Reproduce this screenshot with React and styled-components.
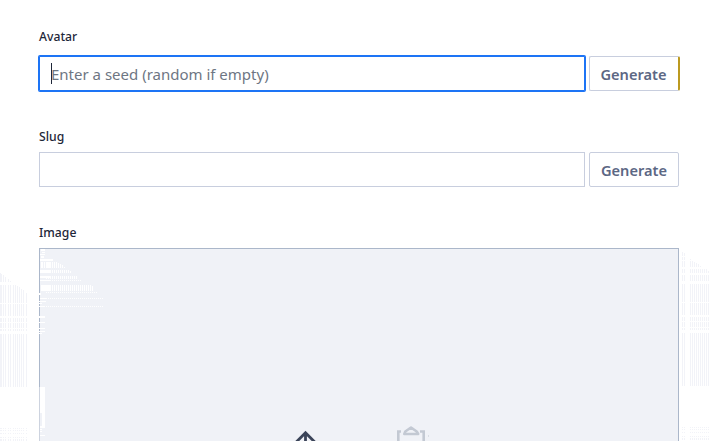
import React from "react";
import styled, { createGlobalStyle, css } from "styled-components";

const GlobalStyle = createGlobalStyle`
  * { box-sizing: border-box; }
  body { margin: 0; background: #fff; overflow: hidden; font-family: "Noto Sans", "Open Sans", sans-serif; }
`;

const Form = styled.form`
  position: relative;
  display: flex;
  flex-direction: column;
  width: 710px;
  height: 441px;
  padding: 28px 30px 0 39px;
  overflow: hidden;
`;

const Field = styled.div`
  display: flex;
  flex-direction: column;
  flex: none;
  height: ${(p) => p.$height}px;
`;

const Label = styled.label`
  flex: none;
  height: ${(p) => p.$height}px;
  line-height: 17px;
  font-size: 12.2px;
  font-weight: 500;
  color: #1e2739;
`;

const Row = styled.div`
  display: flex;
  gap: 4px;
  height: 35px;
`;

const TextBox = styled.div`
  display: flex;
  align-items: center;
  flex: none;
  width: 546px;
  height: 35px;
  padding-left: 11px;
  border: 1px solid #c8cede;
  background: #fff;
  font-size: 15px;
  color: #6e7683;
  white-space: nowrap;
  ${(p) => p.$focused && css`
    border-color: #1d74f5;
    border-radius: 1px;
    box-shadow: 0 0 0 1px #1d74f5;
  `}
`;

const Caret = styled.span`
  width: 1px;
  height: 21px;
  margin-right: -1px;
  background: #1e2739;
`;

const Button = styled.button`
  flex: none;
  width: ${(p) => (p.$accent ? 91 : 90)}px;
  height: 35px;
  padding: 0 ${(p) => (p.$accent ? 1 : 0)}px 0 0;
  border: 1px solid #c8cede;
  border-right: ${(p) => (p.$accent ? "2px solid #bc9a20" : "1px solid #c8cede")};
  border-radius: 2px;
  background: #fff;
  font: 600 14.6px "Noto Sans", sans-serif;
  color: #5c6784;
`;

const DropZone = styled.div`
  flex: none;
  width: 640px;
  height: 260px;
  border: 1px solid #abb7ca;
  background: #f0f2f7;
`;

const Grain = styled.svg`
  position: absolute;
  inset: 0;
  pointer-events: none;
`;

const Icon = styled.svg`
  position: absolute;
  left: ${(p) => p.$x}px;
  top: ${(p) => p.$y}px;
`;

const leftBars = [0, 1, 3, 5, 8, 10, 13, 15, 17, 19, 21, 23, 26];
const leftSpans = [[273, 282], [285, 303], [304, 316], [318, 322], [323, 328], [329, 331], [334, 387], [428, 429], [430, 431], [433, 434], [437, 438], [439, 441]];
const rightBars = [682, 684, 690, 692, 694, 696, 698, 700, 702, 704, 706, 708];
const rightSpans = [[252, 256], [257, 260], [261, 267], [269, 273], [275, 281], [284, 302], [303, 315], [317, 321], [322, 327], [328, 330], [333, 386], [427, 428], [429, 430], [432, 433], [436, 437], [438, 440]];
const innerSpans = [[259, 261, 53], [262, 268, 66], [270, 273, 72], [276, 279, 78], [280, 281, 81], [285, 291, 94], [292, 293, 97], [298, 299, 103], [306, 307, 103]];
const patches = [
  [41, 249, 4, 2], [42, 252, 3, 1], [40, 254, 5, 1], [41, 256, 3, 2],
  [40, 259, 12, 2], [41, 262, 2, 6], [44, 262, 1, 6], [46, 262, 5, 6], [40, 270, 10, 3],
  [40, 276, 10, 2], [40, 280, 10, 1], [41, 285, 10, 6],
  [39, 293, 2, 2], [40, 298, 6, 1], [39, 301, 7, 1], [39, 303, 3, 1], [39, 306, 6, 1],
  [39, 316, 6, 2], [39, 322, 6, 1], [39, 328, 6, 1], [39, 331, 6, 1], [39, 333, 3, 1],
  [40, 387, 5, 26], [42, 413, 3, 13], [40, 426, 5, 2], [39, 429, 3, 1], [39, 431, 3, 1], [39, 435, 6, 1],
];

function stripes(bars, spans, startAt) {
  return bars.flatMap((x) =>
    spans
      .filter(([, end]) => end > startAt(x))
      .map(([start, end]) => {
        const y = Math.max(start, startAt(x));
        return `M${x} ${y}h1V${end}h-1z`;
      })
  ).join("");
}

function hatch(spans) {
  return spans.flatMap(([start, end, limit]) => {
    const parts = [];
    for (let x = 46; x < limit; x += 2) {
      const y = end - start > 1 ? Math.max(start, Math.round(259 + (x - 53) * 0.7)) : start;
      if (y < end) parts.push(`M${x} ${y}h1V${end}h-1z`);
    }
    return parts;
  }).join("");
}

function GrainOverlay() {
  return (
    <Grain width="710" height="441" shapeRendering="crispEdges" aria-hidden="true">
      <path fill="#f2f3f8" d={stripes(leftBars, leftSpans, (x) => Math.round(273 + x * 0.75))} />
      <path fill="#f2f3f8" d={stripes(rightBars, rightSpans, (x) => (x < 688 ? 252 + (x - 682) / 2 : Math.round(259 + (x - 690) * 0.65)))} />
      <path fill="#fff" d={hatch(innerSpans)} />
      <path fill="#fff" d={patches.map(([x, y, w, h]) => `M${x} ${y}h${w}v${h}h${-w}z`).join("")} />
      <path fill="#cdd3df" d="M39 387h1v54h-1z" />
    </Grain>
  );
}

export default function App() {
  return (
    <>
      <GlobalStyle />
      <Form>
        <Field $height={100}>
          <Label $height={28}>Avatar</Label>
          <Row>
            <TextBox $focused><Caret />Enter a seed (random if empty)</TextBox>
            <Button type="button" $accent>Generate</Button>
          </Row>
        </Field>
        <Field $height={96}>
          <Label $height={24}>Slug</Label>
          <Row>
            <TextBox />
            <Button type="button">Generate</Button>
          </Row>
        </Field>
        <Label $height={24}>Image</Label>
        <DropZone />
        <GrainOverlay />
        <Icon $x={293} $y={429} width="25" height="12" fill="none" stroke="#3b4459" strokeWidth="2.8">
          <path d="M2.5 13.8L12.5 3.8l10 10M12.5 3.8V14" />
        </Icon>
        <Icon $x={394} $y={423} width="38" height="18" fill="none" stroke="#c3c9d3" strokeWidth="2.6">
          <path d="M7 8.5H4.3v11M26 8.5h3.7v11" />
          <path d="M10.3 11l1-2.5 5.7-4 5.7 4 1.5 2.5z" strokeLinejoin="round" />
          <path d="M34 13h1" strokeWidth="1" />
        </Icon>
      </Form>
    </>
  );
}
